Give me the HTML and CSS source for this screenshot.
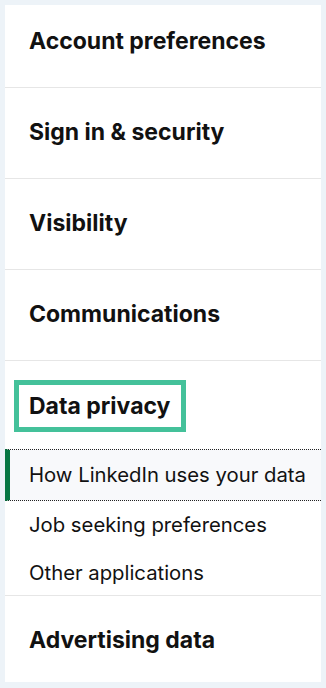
FILE: index.html
```html
<!DOCTYPE html>
<html lang="en">
<head>
<meta charset="utf-8">
<title>Settings</title>
<link rel="stylesheet" href="styles.css">
</head>
<body>
<nav class="card">
  <section class="group group-first"><h2 class="group-title">Account preferences</h2></section>
  <section class="group"><h2 class="group-title">Sign in &amp; security</h2></section>
  <section class="group"><h2 class="group-title">Visibility</h2></section>
  <section class="group"><h2 class="group-title">Communications</h2></section>
  <section class="group group-open">
    <h2 class="group-title group-title-focus">Data privacy</h2>
    <ul class="sublist">
      <li class="sub sub-active">How LinkedIn uses your data</li>
      <li class="sub">Job seeking preferences</li>
      <li class="sub sub-last">Other applications</li>
    </ul>
  </section>
  <section class="group group-last"><h2 class="group-title">Advertising data</h2></section>
</nav>
</body>
</html>
```
FILE: styles.css
```css
html, body {
  margin: 0;
  padding: 0;
}
body {
  background: #edf3f8;
  padding: 5px;
  font-family: Inter, "Noto Sans", "Liberation Sans", sans-serif;
  color: #111111;
}
.card {
  background: #ffffff;
  display: flex;
  flex-direction: column;
}
.group {
  border-bottom: 1px solid #e6e6e6;
  padding: 31px 24px 33px 24px;
}
.group-first {
  padding-top: 23px;
}
.group-last {
  border-bottom: none;
  padding-bottom: 29px;
}
.group-title {
  margin: 0;
  font-size: 23px;
  line-height: 26px;
  font-weight: 700;
  letter-spacing: 0;
}
.group-open {
  padding: 19px 0 0 0;
}
.group-title-focus {
  display: inline-block;
  margin-left: 9px;
  padding: 8px 11px 8px 10px;
  border: 5px solid #44c19a;
}
.sublist {
  list-style: none;
  margin: 17px 0 0 0;
  padding: 0;
}
.sub {
  padding: 12px 24px;
  font-size: 20.3px;
  line-height: 24px;
  font-weight: 400;
}
.sub-active {
  padding: 13px 0 13px 19px;
  border-top: 1px dotted #222;
  border-bottom: 1px dotted #222;
  border-left: 5px solid #057642;
  background: #f8f9fb;
  white-space: nowrap;
}
.sub-last {
  padding-bottom: 10px;
}
```
